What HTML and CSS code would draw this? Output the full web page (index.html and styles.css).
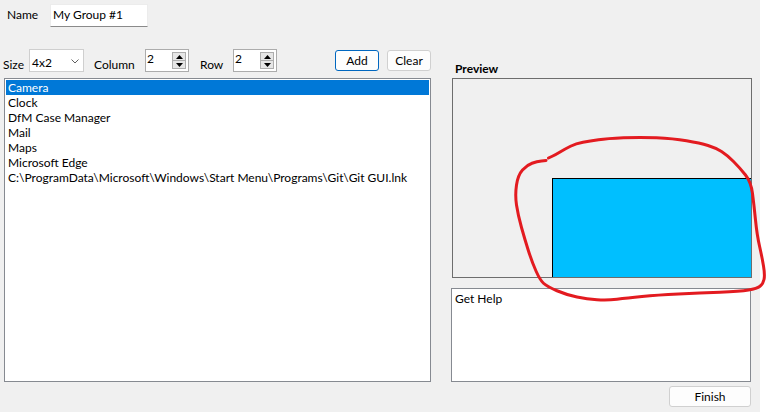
FILE: index.html
```html
<!DOCTYPE html>
<html>
<head>
<meta charset="utf-8">
<link rel="stylesheet" href="styles.css">
</head>
<body>
<div class="screen">
  <div class="window">
    <div class="name-row">
      <span class="name-label">Name</span>
      <div class="text-input">My Group #1</div>
    </div>
    <div class="main">
      <div class="toolbar">
        <span class="lbl lbl-size">Size</span>
        <div class="select"><span>4x2</span>
          <svg class="chev" width="8" height="5" viewBox="0 0 8 5"><path d="M0.5 0.5 L4 4 L7.5 0.5" fill="none" stroke="#606060" stroke-width="1"/></svg>
        </div>
        <span class="lbl lbl-col">Column</span>
        <div class="spinner">
          <span class="spin-val">2</span>
          <div class="spin-btns">
            <div class="spin-btn"><svg width="7" height="4" viewBox="0 0 7 4"><path d="M3.5 0 L7 4 L0 4 Z" fill="#000"/></svg></div>
            <div class="spin-btn"><svg width="7" height="4" viewBox="0 0 7 4"><path d="M0 0 L7 0 L3.5 4 Z" fill="#000"/></svg></div>
          </div>
        </div>
        <span class="lbl lbl-row">Row</span>
        <div class="spinner">
          <span class="spin-val">2</span>
          <div class="spin-btns">
            <div class="spin-btn"><svg width="7" height="4" viewBox="0 0 7 4"><path d="M3.5 0 L7 4 L0 4 Z" fill="#000"/></svg></div>
            <div class="spin-btn"><svg width="7" height="4" viewBox="0 0 7 4"><path d="M0 0 L7 0 L3.5 4 Z" fill="#000"/></svg></div>
          </div>
        </div>
        <button class="btn btn-add">Add</button>
        <button class="btn btn-clear">Clear</button>
      </div>
      <div class="preview-title">Preview</div>
      <div class="listbox">
        <div class="item selected">Camera</div>
        <div class="item">Clock</div>
        <div class="item">DfM Case Manager</div>
        <div class="item">Mail</div>
        <div class="item">Maps</div>
        <div class="item">Microsoft Edge</div>
        <div class="item">C:\ProgramData\Microsoft\Windows\Start Menu\Programs\Git\Git GUI.lnk</div>
      </div>
      <div class="right-col">
        <div class="preview-box">
          <div class="tile"></div>
        </div>
        <div class="help-box">Get Help</div>
        <div class="finish-row"><button class="btn btn-finish">Finish</button></div>
      </div>
    </div>
  </div>
  <div class="edge"></div>
  <svg class="annotation" width="767" height="412" viewBox="0 0 767 412">
    <path d="M548.5 158 L552.25 156.25 Q556 154.5 560.5 151.75 Q565 149 570.5 146.25 Q576 143.5 583 142.25 Q590 141 598.5 139.75 Q607 138.5 623.5 137.75 Q640 137 656.5 137.75 Q673 138.5 686.5 140.75 Q700 143 708 145.5 Q716 148 721.5 151.5 Q727 155 733.5 161.5 Q740 168 745.5 175 Q751 182 752.5 193.5 Q754 205 755.5 220 Q757 235 759.5 246 Q762 257 763.5 266 Q765 275 764 279.5 Q763 284 760 286.25 Q757 288.5 748.5 290 Q740 291.5 720 292.25 Q700 293 678.5 294 Q657 295 642 296.5 Q627 298 617 299.25 Q607 300.5 597 299.75 Q587 299 577 297 Q567 295 557 290.75 Q547 286.5 543.5 283.25 Q540 280 536 271 Q532 262 528.5 251 Q525 240 521.5 227.5 Q518 215 516.5 205 Q515 195 516.5 185 Q518 175 522.5 170 Q527 165 532 163.25 Q537 161.5 541.5 161 Q546 160.5 546 160.5" fill="none" stroke="#e31b20" stroke-width="3" stroke-linecap="round" stroke-linejoin="round"/>
  </svg>
</div>
</body>
</html>
```
FILE: styles.css
```css
* { box-sizing: border-box; }
html, body { margin: 0; padding: 0; }
body {
  width: 767px;
  height: 412px;
  overflow: hidden;
  background: #f0f0f0;
  font-family: Lato, "Noto Sans", sans-serif;
  font-size: 12px;
  line-height: 15px;
  color: #000;
}
.screen {
  position: relative;
  display: flex;
  width: 767px;
  height: 412px;
}
.window {
  width: 760px;
  height: 412px;
  padding-top: 4px;
  background: #f0f0f0;
}
.edge {
  width: 7px;
  height: 412px;
  background: #ffffff;
}
.name-row {
  display: flex;
  align-items: flex-start;
  padding-left: 7px;
  height: 23px;
}
.name-label {
  width: 43px;
  padding-top: 3px;
}
.text-input {
  width: 98px;
  height: 23px;
  background: #fff;
  border: 1px solid #ececec;
  border-bottom: 1px solid #8a8a8a;
  padding: 2px 0 0 2px;
}
.main {
  margin-top: 22px;
  padding-left: 4px;
  display: grid;
  grid-template-columns: 427px 300px;
  grid-template-rows: 29px auto;
  column-gap: 20px;
}
.toolbar {
  display: flex;
  align-items: flex-start;
  margin-left: -1px;
  height: 29px;
}
.lbl { padding-top: 8px; white-space: nowrap; }
.lbl-size { width: 26px; }
.lbl-col { width: 51px; margin-left: 10px; }
.lbl-row { width: 33px; margin-left: 11px; }
.select {
  position: relative;
  width: 55px;
  height: 23px;
  background: #fff;
  border: 1px solid #cfcfcf;
  padding: 5px 0 0 2px;
}
.chev { position: absolute; right: 4px; top: 9px; }
.spinner {
  display: flex;
  justify-content: space-between;
  width: 44px;
  height: 23px;
  background: #fff;
  border: 1px solid #acacac;
  padding: 0 2px 0 1px;
}
.spin-val { padding-top: 1px; }
.spin-btns {
  display: flex;
  flex-direction: column;
  margin-top: 2px;
  width: 14px;
  height: 17px;
}
.spin-btn {
  flex: 1;
  display: flex;
  align-items: center;
  justify-content: center;
  background: #e6e6e6;
  border: 1px solid #adadad;
}
.spin-btn + .spin-btn { border-top: none; }
.btn {
  font-family: inherit;
  font-size: 12px;
  line-height: 15px;
  color: #000;
  padding: 0;
  margin-top: 1px;
  height: 21px;
  border-radius: 3px;
  background: #fdfdfd;
  border: 1px solid #d0d0d0;
}
.btn-add {
  margin-left: auto;
  width: 44px;
  border: 1px solid #0067c0;
}
.btn-clear {
  width: 44px;
  margin-left: 8px;
}
.preview-title {
  font-weight: bold;
  padding: 12px 0 0 4px;
}
.listbox {
  height: 304px;
  background: #fff;
  border: 1px solid #868a91;
  padding: 1px;
}
.item {
  height: 15px;
  padding-left: 2px;
  white-space: nowrap;
}
.item.selected {
  background: #0078d7;
  color: #fff;
}
.right-col {
  display: flex;
  flex-direction: column;
}
.preview-box {
  position: relative;
  margin-left: 1px;
  width: 300px;
  height: 200px;
  border: 1px solid #6d6d6d;
  background: #f0f0f0;
}
.tile {
  position: absolute;
  right: 0;
  bottom: 0;
  width: 199px;
  height: 99px;
  background: #00bfff;
  border-left: 1px solid #000;
  border-top: 1px solid #000;
}
.help-box {
  margin-top: 10px;
  width: 300px;
  height: 94px;
  background: #fff;
  border: 1px solid #868a91;
  padding: 2px 0 0 3px;
}
.finish-row {
  display: flex;
  justify-content: flex-end;
  margin-top: 4px;
}
.btn-finish {
  margin-top: 0;
  width: 82px;
}
.annotation {
  position: absolute;
  left: 0;
  top: 0;
  pointer-events: none;
}
```
